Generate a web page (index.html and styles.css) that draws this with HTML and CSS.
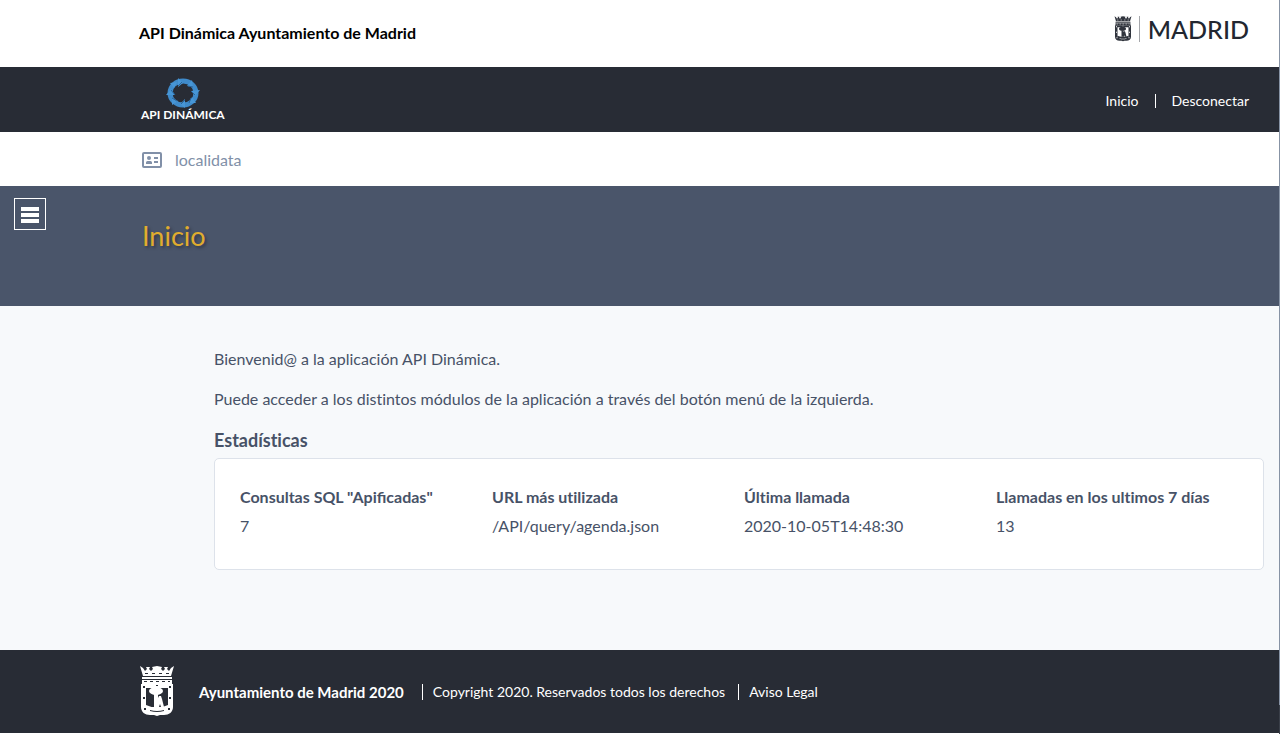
FILE: index.html
```html
<!DOCTYPE html>
<html lang="es">
<head>
<meta charset="utf-8">
<meta name="viewport" content="width=device-width, initial-scale=1">
<title>API Dinámica Ayuntamiento de Madrid</title>
<link rel="stylesheet" href="styles.css">
</head>
<body>
<svg class="sprite" aria-hidden="true">
  <symbol id="crest" viewBox="0 0 36 51">
    <path fill="currentColor" d="M1 0L4 2L6 5L8 3L7 1H11L10 3L12 5L14 3L13 1L18 0L23 1L22 3L24 5L26 3L25 1H29L28 3L30 5L32 2L35 0L32 10H4z"/>
    <path fill="currentColor" d="M3 11h30v2H3zM3 14h30v4H3z"/>
    <path fill="currentColor" fill-rule="evenodd" d="M2 18H34V41C34 46 30 49 25 49H21L18 50L15 49H11C6 49 2 46 2 41zM7 22V41H29V22z"/>
    <path fill="currentColor" d="M7 39Q18 44 29 39V43H7z"/>
    <path class="crest-mark" d="M11 44Q18 46 25 44V45Q18 47 11 45z"/>
    <ellipse fill="currentColor" cx="17" cy="25" rx="7" ry="4"/>
    <path fill="currentColor" d="M15 28h4v13h-4zM20 30h2l1 3 1 4 1 4h-3l-1-3-1 3h-3l1-7z"/>
    <path class="crest-mark" d="M6 7h3v1H6zM13 7h3v1h-3zM20 7h3v1h-3zM27 7h3v1h-3zM5 15h3v1H5zm6 0h3v1h-3zm6 0h3v1h-3zm6 0h3v1h-3zm6 0h2v1h-2zM4 20h2v2H4zM30 20h2v2h-2zM17 19h2v1h-2zM4 31h2v2H4zM30 31h2v2h-2zM5 42h2v2H5zM29 42h2v2h-2z"/>
  </symbol>
</svg>
<header>
  <div class="topbar">
    <strong class="site-name">API Dinámica Ayuntamiento de Madrid</strong>
    <a class="madrid" href="#" aria-label="Madrid">
      <svg class="crest-small" aria-hidden="true"><use href="#crest"/></svg>
      <span class="madrid-word">MADRID</span>
    </a>
  </div>
  <div class="navbar">
    <a class="api-logo" href="#">
      <svg class="api-ring" viewBox="0 0 36 32" aria-hidden="true">
        <ellipse cx="18" cy="16" rx="13" ry="12" fill="none" stroke="#3f8bcb" stroke-width="5"/>
        <path fill="#4796d6" d="M13 1l5 5-5 4zM27 3l1 7-6-1zM35 13l-5 6-4-5zM31 26l-7 0 3-6zM20 31l-5-4 5-5zM7 28l0-7 6 3zM1 18l5-6 4 6zM5 6l7-1-3 6z"/>
        <path fill="none" stroke="#2b6499" d="M17 5l-4 4M28 10l-5-1M30 18l-4-4M24 26l2-5M16 27l4-4M7 21l5 3M6 13l4 5"/>
      </svg>
      <span>API DINÁMICA</span>
    </a>
    <nav class="links">
      <a href="#">Inicio</a>
      <a href="#">Desconectar</a>
    </nav>
  </div>
  <div class="userbar">
    <svg class="card-icon" viewBox="0 0 20 16" aria-hidden="true">
      <rect x="1" y="1" width="18" height="14" rx="1" fill="none" stroke="currentColor" stroke-width="2"/>
      <circle cx="7" cy="6" r="2" fill="currentColor"/>
      <path fill="currentColor" d="M4 12v-1.500q0-1.500 1.500-1.500h3q1.500 0 1.500 1.500V12zM12 5h4v2h-4zM12 9h4v2h-4z"/>
    </svg>
    <span>localidata</span>
  </div>
</header>
<section class="banner">
  <button class="menu" type="button" aria-label="Menú">
    <svg viewBox="0 0 18 16" aria-hidden="true"><path fill="currentColor" d="M0 0h18v4H0zM0 6h18v4H0zM0 12h18v4H0z"/></svg>
  </button>
  <h1>Inicio</h1>
</section>
<main>
  <p>Bienvenid@ a la aplicación API Dinámica.</p>
  <p>Puede acceder a los distintos módulos de la aplicación a través del botón menú de la izquierda.</p>
  <h2>Estadísticas</h2>
  <dl class="stats">
    <div><dt class="ligated">Consultas SQL "Apificadas"</dt><dd>7</dd></div>
    <div><dt>URL más utilizada</dt><dd>/API/query/agenda.json</dd></div>
    <div><dt>Última llamada</dt><dd>2020-10-05T14:48:30</dd></div>
    <div><dt>Llamadas en los ultimos 7 días</dt><dd>13</dd></div>
  </dl>
</main>
<footer>
  <svg class="crest-large" aria-hidden="true"><use href="#crest"/></svg>
  <strong>Ayuntamiento de Madrid 2020</strong>
  <span class="divided">Copyright 2020. Reservados todos los derechos</span>
  <a class="divided" href="#">Aviso Legal</a>
</footer>
</body>
</html>
```
FILE: styles.css
```css
* { box-sizing: border-box; }

html { background: #fff; }

body {
  display: flex;
  flex-direction: column;
  min-height: 100vh;
  margin: 0;
  padding: 0 1px 1px 0;
  background: linear-gradient(#8793a5 96%, #3a3f49 96%) right / 1px 100% no-repeat #fff;
  color: #475267;
  font: 16px/24px Lato, sans-serif;
  font-variant-ligatures: none;
}

a { color: inherit; text-decoration: none; }

.sprite { position: absolute; width: 0; height: 0; }

.topbar,
.navbar {
  display: flex;
  align-items: center;
  justify-content: space-between;
  padding: 0 30px 0 139px;
}

.topbar { height: 67px; padding-bottom: 2px; background: #fff; color: #000; }

.site-name { font-size: 16px; }

.madrid {
  display: flex;
  align-items: center;
  padding-bottom: 8px;
  color: #222731;
}

.crest-small { width: 18px; height: 26px; color: #30343d; }

.crest-mark { fill: #fff; }

.madrid-word {
  margin-left: 7px;
  padding-left: 8px;
  border-left: 1px solid #a5a7ab;
  font-size: 25px;
  font-weight: 500;
  line-height: 26px;
}

.navbar { height: 65px; background: #282c35; color: #fff; }

.api-logo {
  display: flex;
  flex-direction: column;
  align-items: center;
  padding: 0 0 2px 2px;
  font-size: 12px;
  font-weight: 700;
  line-height: 12px;
}

.api-ring { width: 36px; height: 32px; }

.links { display: flex; align-items: center; padding-top: 2px; font-size: 14px; line-height: 14px; }

.links a + a { margin-left: 16px; padding-left: 16px; border-left: 1px solid #fff; }

.userbar {
  display: flex;
  align-items: center;
  gap: 13px;
  height: 54px;
  padding: 1px 0 0 142px;
  background: #fff;
  color: #8190a8;
}

.card-icon { width: 20px; height: 16px; }

.banner {
  display: flex;
  align-items: flex-start;
  gap: 96px;
  height: 120px;
  padding: 12px 14px;
  background: #4a556a;
}

.menu {
  display: grid;
  place-items: center;
  width: 32px;
  height: 32px;
  padding: 2px 0 0;
  border: 1px solid #fff;
  background: none;
  color: #fff;
}

.menu svg { width: 18px; height: 16px; }

h1 {
  margin: 22px 0 0;
  color: #e0ad2e;
  font-size: 27px;
  font-weight: 400;
  line-height: 32px;
  text-shadow: 2px 2px 3px #343a48;
}

main {
  flex: 1;
  padding: 41px 15px 80px 214px;
  background: #f7f9fb;
}

main p { margin: 0 0 16px; }

h2 { margin: 0 0 5px; font-size: 18px; line-height: 26px; }

.stats {
  display: grid;
  grid-template-columns: repeat(4, 1fr);
  margin: 0;
  padding: 25px 15px 31px 25px;
  border: 1px solid #dde2ea;
  border-radius: 5px;
  background: #fff;
}

.stats dt { margin-bottom: 4px; font-weight: 700; line-height: 26px; }

.stats .ligated { font-variant-ligatures: normal; }

.stats dd { margin: 0; }

footer {
  display: flex;
  align-items: center;
  height: 83px;
  padding-left: 139px;
  background: #282c35;
  color: #fff;
  font-size: 14px;
  line-height: 16px;
}

footer strong { margin: 0 5px 0 24px; font-size: 15px; }

.crest-large { width: 36px; height: 51px; }

footer .crest-mark { fill: #282c35; }

.crest-large { --mark: #282c35; }

.divided { margin-left: 13px; padding-left: 10px; border-left: 1px solid #fff; }

.crest-mark { fill: var(--mark, #fff); }
```
